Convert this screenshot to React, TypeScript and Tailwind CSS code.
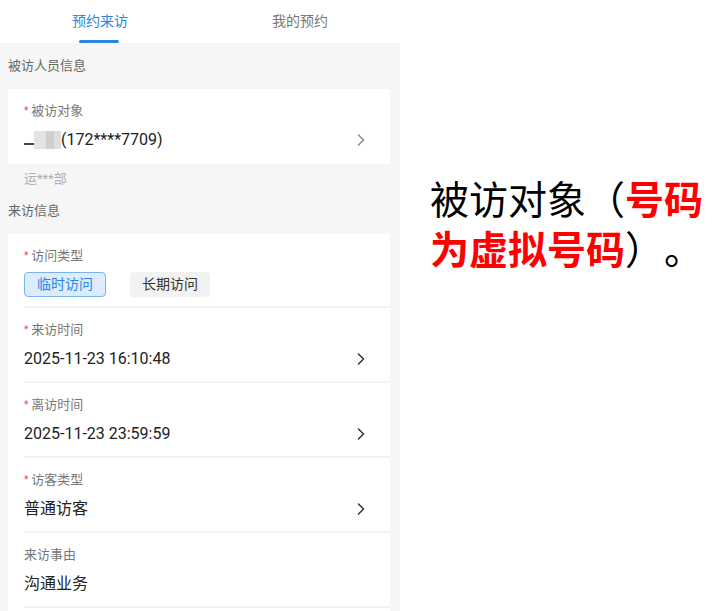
import React from "react";

const font = { fontFamily: "Roboto, 'Noto Sans CJK SC', sans-serif" };

function Chevron({ light }: { light?: boolean }) {
  return (
    <svg width="10" height="14" viewBox="0 0 10 14" fill="none" className="shrink-0">
      <path
        d="M2.5 2 L7.5 7 L2.5 12"
        stroke={light ? "#8a8a8a" : "#333333"}
        strokeWidth="1.5"
        strokeLinecap="round"
        strokeLinejoin="round"
      />
    </svg>
  );
}

function Label({ text, required = true }: { text: string; required?: boolean }) {
  return (
    <div className="flex h-[18px] items-center text-[13px] leading-[18px] text-[#777]">
      {required && <span className="mr-[3px] text-[10px] text-[#e5484d]">*</span>}
      {text}
    </div>
  );
}

function Row({
  label,
  value,
  required = true,
  arrow = true,
}: {
  label: string;
  value: React.ReactNode;
  required?: boolean;
  arrow?: boolean;
}) {
  return (
    <div className="ml-4 border-b-2 border-[#f3f3f3] pr-6 pt-[13px] pb-[10px]">
      <Label text={label} required={required} />
      <div className="mt-2 flex h-6 items-center justify-between text-[16px] leading-6 text-[#222]">
        <div className="flex items-center">{value}</div>
        {arrow && <Chevron />}
      </div>
    </div>
  );
}

export default function App() {
  return (
    <div className="flex h-[611px] w-[720px] overflow-hidden bg-white" style={font}>
      <div className="flex w-[400px] shrink-0 flex-col bg-[#f6f6f6]">
        <div className="flex h-[43px] shrink-0 bg-white">
          <div className="relative flex flex-1 items-center justify-center text-[14px] text-[#2b85e4]">
            预约来访
            <span className="absolute bottom-0 left-[79px] h-[3px] w-[40px] rounded-full bg-[#2b85e4]" />
          </div>
          <div className="flex flex-1 items-center justify-center text-[14px] text-[#777]">我的预约</div>
        </div>

        <div className="flex flex-1 flex-col pl-2 pr-[10px]">
          <div className="mt-[14px] h-[18px] text-[13px] leading-[18px] text-[#666]">被访人员信息</div>

          <div className="mt-[14px] bg-white">
            <div className="ml-4 pr-6 pt-[13px] pb-3">
              <Label text="被访对象" />
              <div className="mt-2 flex h-6 items-center justify-between text-[16px] leading-6 text-[#222]">
                <div className="flex items-center">
                  <span className="mt-2 h-[2px] w-[10px] bg-[#444]" />
                  <span className="h-[18px] w-[12px] bg-[#e4e4e4]" />
                  <span className="h-[18px] w-[8px] bg-[#cfcfcf]" />
                  <span className="h-[18px] w-[7px] bg-[#dedede]" />
                  <span>(172****7709)</span>
                </div>
                <Chevron light />
              </div>
            </div>
          </div>

          <div className="mt-[6px] ml-4 h-[18px] text-[13px] leading-[18px] text-[#b0b0b0]">运***部</div>

          <div className="mt-[14px] h-[18px] text-[13px] leading-[18px] text-[#666]">来访信息</div>

          <div className="mt-[14px] flex-1 bg-white">
            <div className="ml-4 border-b-2 border-[#f3f3f3] pr-6 pt-[13px] pb-[9px]">
              <Label text="访问类型" />
              <div className="mt-[7px] flex gap-6">
                <span className="flex h-[25px] w-[82px] items-center justify-center rounded-[4px] border border-[#7ab4f0] bg-[#dcecfd] text-[14px] text-[#2b85e4]">
                  临时访问
                </span>
                <span className="flex h-[25px] w-[80px] items-center justify-center rounded-[4px] bg-[#f2f2f2] text-[14px] text-[#333]">
                  长期访问
                </span>
              </div>
            </div>
            <Row label="来访时间" value="2025-11-23 16:10:48" />
            <Row label="离访时间" value="2025-11-23 23:59:59" />
            <Row label="访客类型" value="普通访客" />
            <Row label="来访事由" value="沟通业务" required={false} arrow={false} />
          </div>
        </div>
      </div>

      <div className="flex-1 pl-[30px] pt-[174px]">
        <div
          className="text-[39px] leading-[46px] text-black [text-spacing-trim:space-all]"
          style={{ fontFamily: "'Liberation Serif', 'Noto Sans CJK SC', serif" }}
        >
          被访对象（<span className="font-bold text-[#ff0000]" style={{ fontFamily: "'Noto Sans CJK SC', sans-serif" }}>号码</span>
          <br />
          <span className="font-bold text-[#ff0000]" style={{ fontFamily: "'Noto Sans CJK SC', sans-serif" }}>为虚拟号码</span>）。
        </div>
      </div>
    </div>
  );
}
